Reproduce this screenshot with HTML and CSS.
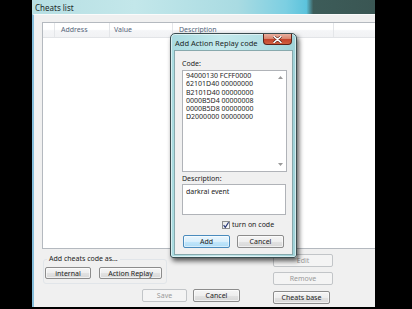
FILE: index.html
```html
<!DOCTYPE html>
<html>
<head>
<meta charset="utf-8">
<link rel="stylesheet" href="styles.css">
</head>
<body>
<div class="screen">
  <div class="window">
    <div class="titlebar"><span class="title">Cheats list</span></div>
    <div class="client">
      <div class="list">
        <div class="list-header">
          <div class="col c0"></div>
          <div class="col c1">Address</div>
          <div class="col c2">Value</div>
          <div class="col c3">Description</div>
          <div class="col c4"></div>
        </div>
      </div>
      <div class="bottom">
        <div class="left">
          <fieldset class="group">
            <legend>Add cheats code as...</legend>
            <div class="group-buttons">
              <button class="btn w-internal">internal</button>
              <button class="btn w-ar">Action Replay</button>
            </div>
          </fieldset>
          <div class="actions">
            <button class="btn disabled w-save">Save</button>
            <button class="btn w-cancel">Cancel</button>
          </div>
        </div>
        <div class="right">
          <button class="btn disabled w-side">Edit</button>
          <button class="btn disabled w-side">Remove</button>
          <button class="btn w-base">Cheats base</button>
        </div>
      </div>
    </div>
  </div>

  <div class="dialog">
    <div class="dlg-title">
      <span class="dlg-title-text">Add Action Replay code</span>
      <div class="close">
        <svg width="9" height="7" viewBox="0 0 9 7"><path d="M1 0.5 L8 6.5 M8 0.5 L1 6.5" stroke="#4a1a12" stroke-width="2.6" stroke-linecap="round"/><path d="M1 0.5 L8 6.5 M8 0.5 L1 6.5" stroke="#ffffff" stroke-width="1.6" stroke-linecap="round"/></svg>
      </div>
    </div>
    <div class="dlg-client">
      <div class="label code-label">Code:</div>
      <div class="codebox">
        <div class="code-text">
          <div>94000130 FCFF0000</div>
          <div>62101D40 00000000</div>
          <div>B2101D40 00000000</div>
          <div>0000B5D4 00000008</div>
          <div>0000B5D8 00000000</div>
          <div>D2000000 00000000</div>
        </div>
        <div class="scroll">
          <svg width="5" height="3" viewBox="0 0 5 3"><polygon points="0,3 2.5,0 5,3" fill="#9a9a9a"/></svg>
          <svg width="5" height="3" viewBox="0 0 5 3"><polygon points="0,0 5,0 2.5,3" fill="#9a9a9a"/></svg>
        </div>
      </div>
      <div class="label desc-label">Description:</div>
      <div class="descbox">darkrai event</div>
      <div class="check">
        <span class="box"><svg width="8" height="8" viewBox="0 0 8 8"><path d="M1.6 4.2 L3.3 6.4 L6.6 1.2" fill="none" stroke="#2c3c78" stroke-width="1.2"/></svg></span>
        <span>turn on code</span>
      </div>
      <div class="dlg-buttons">
        <button class="btn default w-dlg">Add</button>
        <button class="btn w-dlg">Cancel</button>
      </div>
    </div>
  </div>
</div>
</body>
</html>
```
FILE: styles.css
```css
html, body {
  margin: 0;
  padding: 0;
}
body {
  width: 412px;
  height: 309px;
  background: #000;
  overflow: hidden;
  font-family: "Noto Sans", "Open Sans", sans-serif;
  font-size: 7px;
  color: #222;
}
.screen {
  position: relative;
  width: 412px;
  height: 309px;
}
.window {
  margin-left: 32px;
  width: 343px;
  height: 307px;
  display: flex;
  flex-direction: column;
}
.titlebar {
  height: 14px;
  flex: none;
  display: flex;
  align-items: center;
  padding-left: 3px;
  font-size: 8px;
  color: #1b2a2a;
  background: linear-gradient(90deg, #b7dfe3 0%, #c3e7ea 30%, #a9dbe2 60%, #7ccfe2 74%, #5cc3dc 80%, #3d5c59 82%, #3a5653 100%);
}
.client {
  flex: 1;
  background: #f0f0f0;
  border-left: 2px solid #86bedb;
  border-top: 1px solid #fbfbfb;
  display: flex;
  flex-direction: column;
}
.list {
  margin: 7px 0 0 8px;
  height: 227px;
  box-sizing: border-box;
  background: #fff;
  border: 1px solid #b4b9bf;
  border-right: none;
  flex: none;
}
.list-header {
  height: 14px;
  display: flex;
  background: linear-gradient(#ffffff 0%, #ffffff 45%, #f4f5f7 55%, #f1f2f4 100%);
  border-bottom: 1px solid #e2e4e7;
}
.col {
  box-sizing: border-box;
  border-right: 1px solid #e4e6e9;
  padding-left: 5px;
  line-height: 14px;
  color: #55657a;
}
.c0 { width: 12px; }
.c1 { width: 55px; padding-left: 6px; }
.c2 { width: 63px; padding-left: 4px; }
.c3 { width: 161px; padding-left: 6px; }
.c4 { flex: 1; border-right: none; }

.bottom {
  display: flex;
  flex: 1;
}
.left {
  width: 206px;
  display: flex;
  flex-direction: column;
}
.group {
  margin: 5px 0 0 9px;
  width: 124px;
  box-sizing: border-box;
  padding: 3px 0 4px 1px;
  border: 1px solid #e1e5e9;
  border-radius: 3px;
  min-width: 0;
}
.group legend {
  margin-left: 2px;
  padding: 0 2px;
  line-height: 10px;
  font-size: 7px;
}
.group-buttons {
  display: flex;
  gap: 8px;
}
.actions {
  margin-top: 5px;
  display: flex;
  justify-content: flex-end;
  gap: 6px;
}
.right {
  margin-left: 33px;
  display: flex;
  flex-direction: column;
  align-items: flex-start;
  padding-top: 5px;
  gap: 5px;
}
.btn {
  box-sizing: border-box;
  height: 13px;
  padding: 0;
  margin: 0;
  font-family: "Noto Sans", "Open Sans", sans-serif;
  font-size: 7px;
  line-height: 11px;
  color: #222;
  border: 1px solid #8c8c8c;
  border-radius: 2px;
  background: linear-gradient(#f5f5f5 0%, #eeeeee 50%, #e2e2e2 52%, #d8d8d8 100%);
  box-shadow: inset 0 0 0 1px rgba(255,255,255,0.6);
}
.btn.disabled {
  color: #9a9a9a;
  border-color: #c2c5c8;
  background: #f4f4f4;
  box-shadow: none;
}
.btn.default {
  border-color: #4a8bbd;
  background: linear-gradient(#eaf6fd 0%, #d9effc 50%, #c2e6fb 52%, #aedcf6 100%);
  box-shadow: inset 0 0 0 1px rgba(255,255,255,0.5);
}
.w-internal { width: 46px; height: 12px; }
.w-ar { width: 63px; height: 12px; }
.w-save { width: 45px; }
.w-cancel { width: 47px; }
.w-side { width: 60px; }
.w-base { width: 57px; margin-top: 1px; }

/* dialog */
.dialog {
  position: absolute;
  left: 170px;
  top: 33px;
  width: 127px;
  height: 225px;
  box-sizing: border-box;
  border: 1px solid #3b4d50;
  border-radius: 5px 5px 3px 3px;
  padding: 0 3px 2px 3px;
  display: flex;
  flex-direction: column;
  background: linear-gradient(90deg, #a9dbe0 0%, #c4e9ec 40%, #b6e1e5 70%, #9fd3d9 100%);
  box-shadow: 2px 3px 5px rgba(0,0,0,0.65), inset 0 0 0 1px rgba(255,255,255,0.55);
}
.dlg-title {
  height: 16px;
  flex: none;
  display: flex;
  align-items: flex-start;
}
.dlg-title-text {
  padding-left: 1px;
  padding-top: 4px;
  font-size: 7.5px;
  line-height: 10px;
  white-space: nowrap;
  color: #1b2626;
}
.close {
  margin-left: auto;
  margin-right: 1px;
  flex: none;
  width: 29px;
  height: 11px;
  box-sizing: border-box;
  border: 1px solid #5e2218;
  border-top: none;
  border-radius: 0 0 4px 4px;
  background: linear-gradient(#eab0a0 0%, #d98770 45%, #c4442c 55%, #d0603f 100%);
  display: flex;
  align-items: center;
  justify-content: center;
}
.dlg-client {
  flex: 1;
  box-sizing: border-box;
  background: #f0f0f0;
  border: 1px solid #88a9ad;
  padding: 0 5px 0 7px;
  display: flex;
  flex-direction: column;
}
.label {
  line-height: 9px;
  font-size: 7px;
}
.code-label {
  margin-top: 8px;
  height: 11px;
}
.codebox {
  height: 102px;
  width: 105px;
  box-sizing: border-box;
  background: #fff;
  border: 1px solid #b0b3b8;
  display: flex;
  flex: none;
}
.code-text {
  flex: 1;
  padding: 1px 0 0 3px;
  line-height: 8.3px;
  font-size: 7px;
  color: #262626;
}
.scroll {
  width: 12px;
  display: flex;
  flex-direction: column;
  justify-content: space-between;
  align-items: center;
  padding: 5px 0 5px 0;
}
.scroll svg { display: block; }
.desc-label {
  margin-top: 2px;
  height: 10px;
}
.descbox {
  height: 31px;
  width: 104px;
  box-sizing: border-box;
  background: #fff;
  border: 1px solid #b0b3b8;
  padding: 2px 3px;
  line-height: 9px;
  flex: none;
}
.check {
  margin-top: 5px;
  display: flex;
  align-items: center;
  gap: 2px;
  padding-left: 40px;
  height: 9px;
  line-height: 9px;
}
.box {
  width: 8px;
  height: 8px;
  box-sizing: border-box;
  border: 1px solid #8e8f8f;
  background: linear-gradient(135deg, #e6e6e6, #ffffff);
  display: flex;
  align-items: center;
  justify-content: center;
}
.box svg { display: block; margin: -1px; }
.dlg-buttons {
  margin-top: 6px;
  display: flex;
  gap: 7px;
  padding-left: 1px;
}
.w-dlg { width: 47px; }
```
